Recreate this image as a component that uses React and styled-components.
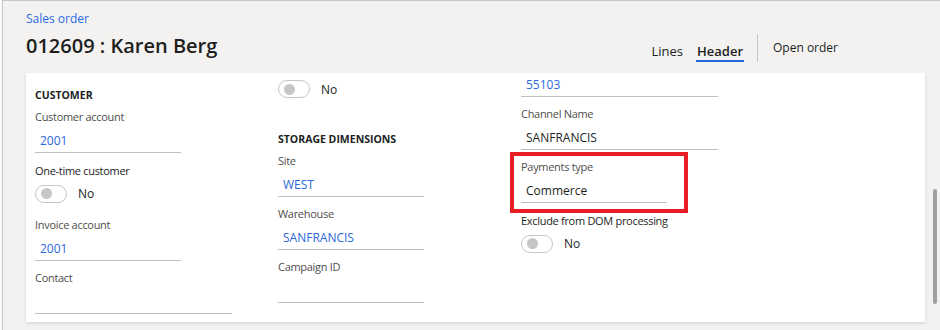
import React from "react";
import styled, { createGlobalStyle } from "styled-components";

const GlobalStyle = createGlobalStyle`
  html, body { margin: 0; padding: 0; background: #fafafa; }
  body { font-family: "Open Sans", "Noto Sans", sans-serif; color: #201f1e; }
  * { box-sizing: border-box; }
`;

const Window = styled.div`
  margin-left: 2px;
  width: 938px;
  height: 330px;
  background: #f3f2f1;
  border-top: 1px solid #c8c6c4;
  border-left: 1px solid #c8c6c4;
  overflow: hidden;
`;

const PageHeader = styled.header`
  display: flex;
  align-items: flex-start;
  padding: 9px 102px 0 23px;
`;

const TitleBlock = styled.div`
  display: flex;
  flex-direction: column;
  margin-top: 1px;
`;

const Breadcrumb = styled.a`
  font-size: 12px;
  line-height: 16px;
  color: #2a6ae6;
  text-decoration: none;
`;

const Title = styled.h1`
  margin: 5px 0 0;
  font-size: 20px;
  line-height: 28px;
  font-weight: 600;
  color: #201f1e;
`;

const Actions = styled.nav`
  margin-left: auto;
  margin-top: 24px;
  height: 28px;
  display: flex;
  align-items: flex-end;
`;

const Tab = styled.span`
  font-size: 13px;
  line-height: 18px;
  padding: 0 1px;
  margin-left: 12px;
  font-weight: ${(p) => (p.$active ? 600 : 400)};
  color: #201f1e;
  border-bottom: 2px solid ${(p) => (p.$active ? "#2266e3" : "transparent")};
`;

const Divider = styled.span`
  align-self: stretch;
  width: 1px;
  margin: 0 15px 0 13px;
  background: #c8c6c4;
`;

const ActionButton = styled.span`
  font-size: 12px;
  line-height: 18px;
  padding-bottom: 5px;
  color: #201f1e;
`;

const Body = styled.div`
  display: flex;
  margin-top: 11px;
  padding-left: 23px;
`;

const Card = styled.section`
  width: 899px;
  height: 249px;
  background: #ffffff;
  overflow: hidden;
  display: grid;
  grid-template-columns: repeat(3, 243px);
  align-items: start;
  padding-left: 9px;
  box-shadow: 0 1.6px 3.6px rgba(0, 0, 0, 0.13), 0 0.3px 0.9px rgba(0, 0, 0, 0.11);
`;

const ScrollTrack = styled.div`
  width: 15px;
  padding-left: 8px;
`;

const Thumb = styled.div`
  width: 4px;
  height: 115px;
  margin-top: 116px;
  border-radius: 2px;
  background: #a19f9d;
`;

const Column = styled.div`
  display: flex;
  flex-direction: column;
  margin-top: ${(p) => p.$offset}px;
`;

const Section = styled.div`
  display: flex;
  flex-direction: column;
  margin-top: ${(p) => p.$gap || 0}px;
`;

const Heading = styled.h2`
  margin: 0 0 6px;
  font-size: 10.5px;
  line-height: 16px;
  font-weight: 700;
  text-transform: uppercase;
  color: #201f1e;
`;

const FieldBox = styled.div`
  display: flex;
  flex-direction: column;
  width: ${(p) => (p.$wide ? 197 : 146)}px;
  margin-bottom: 9px;
  position: relative;
`;

const Label = styled.label`
  font-size: 11px;
  line-height: 16px;
  letter-spacing: -0.3px;
  white-space: nowrap;
  padding-top: ${(p) => (p.$strong ? 1 : 0)}px;
  color: ${(p) => (p.$strong ? "#252423" : "#4f4e4c")};
`;

const Input = styled.div`
  height: 28px;
  padding: 4px 5px 0;
  line-height: 23px;
  font-size: 12px;
  border-bottom: 1px solid #c1bfbd;
  color: ${(p) => (p.$link ? "#2b68dc" : "#201f1e")};
  white-space: nowrap;
`;

const ToggleRow = styled.div`
  height: ${(p) => (p.$tall ? 29 : 28)}px;
  display: flex;
  align-items: center;
`;

const Switch = styled.span`
  width: 32px;
  height: 18px;
  border-radius: 9px;
  border: 1px solid #c8c6c4;
  display: flex;
  align-items: center;
  padding-left: 5px;
  &::before {
    content: "";
    width: 11px;
    height: 11px;
    border-radius: 50%;
    background: #c8c6c4;
  }
`;

const SwitchText = styled.span`
  margin-left: 11px;
  font-size: 12px;
  color: #201f1e;
`;

const Highlight = styled(FieldBox)`
  &::after {
    content: "";
    position: absolute;
    top: -7px;
    left: -11px;
    right: -21px;
    bottom: -10px;
    border: 4px solid #e81d25;
    pointer-events: none;
  }
`;

function Field({ label, value, link, wide }) {
  return (
    <FieldBox $wide={wide}>
      <Label>{label}</Label>
      <Input $link={link}>{value}</Input>
    </FieldBox>
  );
}

function Toggle({ label }) {
  return (
    <FieldBox>
      {label && <Label $strong>{label}</Label>}
      <ToggleRow $tall={!!label}>
        <Switch />
        <SwitchText>No</SwitchText>
      </ToggleRow>
    </FieldBox>
  );
}

export default function App() {
  return (
    <>
      <GlobalStyle />
      <Window>
        <PageHeader>
          <TitleBlock>
            <Breadcrumb href="#">Sales order</Breadcrumb>
            <Title>012609 : Karen Berg</Title>
          </TitleBlock>
          <Actions>
            <Tab>Lines</Tab>
            <Tab $active>Header</Tab>
            <Divider />
            <ActionButton>Open order</ActionButton>
          </Actions>
        </PageHeader>
        <Body>
          <Card>
            <Column $offset={14}>
              <Section>
                <Heading>Customer</Heading>
                <Field label="Customer account" value="2001" link />
                <Toggle label="One-time customer" />
                <Field label="Invoice account" value="2001" link />
                <Field label="Contact" value="" wide />
              </Section>
            </Column>
            <Column $offset={2}>
              <Toggle />
              <Section $gap={19}>
                <Heading>Storage dimensions</Heading>
                <Field label="Site" value="WEST" link />
                <Field label="Warehouse" value="SANFRANCIS" link />
                <Field label="Campaign ID" value="" />
              </Section>
            </Column>
            <Column $offset={-4}>
              <FieldBox $wide>
                <Input $link>55103</Input>
              </FieldBox>
              <Field label="Channel Name" value="SANFRANCIS" wide />
              <Highlight>
                <Label>Payments type</Label>
                <Input>Commerce</Input>
              </Highlight>
              <Toggle label="Exclude from DOM processing" />
            </Column>
          </Card>
          <ScrollTrack>
            <Thumb />
          </ScrollTrack>
        </Body>
      </Window>
    </>
  );
}
